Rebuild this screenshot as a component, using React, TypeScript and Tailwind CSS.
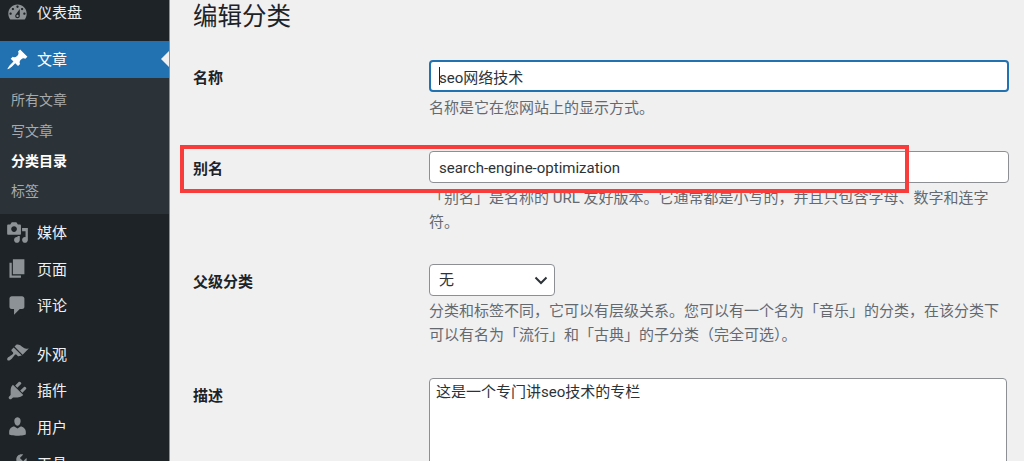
import type { ReactNode } from "react";

const ICONS: Record<string, string> = {
  dashboard:
    "M3.76 16h12.48c1.1-1.37 1.76-3.11 1.76-5 0-4.42-3.58-8-8-8s-8 3.58-8 8c0 1.89.66 3.63 1.76 5zM10 4c.55 0 1 .45 1 1s-.45 1-1 1-1-.45-1-1 .45-1 1-1zM6 6c.55 0 1 .45 1 1s-.45 1-1 1-1-.45-1-1 .45-1 1-1zm8 0c.55 0 1 .45 1 1s-.45 1-1 1-1-.45-1-1 .45-1 1-1zm-5.37 5.55L12 7v6c0 1.1-.9 2-2 2s-2-.9-2-2c0-.57.24-1.08.63-1.45zM4 10c.55 0 1 .45 1 1s-.45 1-1 1-1-.45-1-1 .45-1 1-1zm12 0c.55 0 1 .45 1 1s-.45 1-1 1-1-.45-1-1 .45-1 1-1zm-5 3c0-.55-.45-1-1-1s-1 .45-1 1 .45 1 1 1 1-.45 1-1z",
  pin: "M10.44 3.02l1.82-1.82 6.36 6.35-1.83 1.82c-1.05-.68-2.48-.57-3.41.36l-.75.75c-.92.93-1.04 2.35-.35 3.41l-1.83 1.82-2.41-2.41-2.8 2.79c-.42.42-3.38 2.71-3.8 2.29s1.86-3.39 2.28-3.81l2.79-2.79L4.1 9.36l1.83-1.82c1.05.69 2.48.57 3.4-.36l.75-.75c.93-.92 1.05-2.35.36-3.41z",
  media:
    "M13 11V4c0-.55-.45-1-1-1h-1.67L9 1H5L3.67 3H2c-.55 0-1 .45-1 1v7c0 .55.45 1 1 1h10c.55 0 1-.45 1-1zM7 4.5c1.38 0 2.5 1.12 2.5 2.5S8.38 9.5 7 9.5 4.5 8.38 4.5 7 5.62 4.5 7 4.5zM14 6h5v10.5c0 1.38-1.12 2.5-2.5 2.5S14 17.88 14 16.5s1.12-2.5 2.5-2.5c.17 0 .34.02.5.05V9h-3V6zm-4 8.05V13h2v3.5c0 1.38-1.12 2.5-2.5 2.5S7 17.88 7 16.5 8.12 14 9.5 14c.17 0 .34.02.5.05z",
  pages: "M6 15V2h10v13H6zm-1 1h8v2H3V5h2v11z",
  comments:
    "M5 2h9c1.1 0 2 .9 2 2v7c0 1.1-.9 2-2 2h-2l-5 5v-5H5c-1.1 0-2-.9-2-2V4c0-1.1.9-2 2-2z",
  appearance:
    "M14.48 11.06L7.41 3.99l1.5-1.5c.5-.56 2.3-.47 3.51.32 1.21.8 1.43 1.28 2.91 2.1 1.18.64 2.45 1.26 4.45.85zm-.71.71L6.7 4.7 4.93 6.47c-.39.39-.39 1.02 0 1.41l1.06 1.06c.39.39.39 1.03 0 1.42-.6.6-1.43 1.11-2.21 1.69-.35.26-.7.53-1.01.84C1.43 13.23.4 14.84 1.33 15.77c.92.93 2.54-.1 3.9-1.45.31-.31.58-.66.84-1.01.58-.78 1.09-1.61 1.69-2.21.39-.39 1.02-.39 1.41 0l1.06 1.06c.39.39 1.02.39 1.41 0z",
  plugins:
    "M13.11 4.36L9.87 7.6 8 5.73l3.24-3.24c.35-.34 1.05-.2 1.56.32.52.51.66 1.21.31 1.55zm-8 1.77l.91-1.12 9.01 9.01-1.19.84c-.71.71-2.63 1.16-3.82 1.16H6.14L4.9 17.26c-.59.59-1.54.59-2.12 0-.59-.58-.59-1.53 0-2.12l1.24-1.24v-3.88c0-1.13.4-3.19 1.09-3.89zm7.26 3.97l3.24-3.24c.34-.35 1.04-.21 1.55.31.52.51.66 1.21.31 1.55l-3.24 3.25z",
  users:
    "M10 9.25c-2.27 0-2.73-3.44-2.73-3.44C7 4.02 7.82 2 9.97 2c2.16 0 2.98 2.02 2.71 3.81 0 0-.41 3.44-2.68 3.44zm0 2.57L12.72 10c2.39 0 4.52 2.33 4.52 4.53v2.49s-3.65 1.13-7.24 1.13c-3.65 0-7.24-1.13-7.24-1.13v-2.49c0-2.25 1.94-4.48 4.47-4.48z",
  tools:
    "M16.68 9.77c-1.34 1.34-3.3 1.67-4.95.99l-5.41 6.52c-.99.99-2.59.99-3.58 0s-.99-2.59 0-3.57l6.52-5.42c-.68-1.65-.35-3.61.99-4.95 1.28-1.28 3.12-1.62 4.72-1.06l-2.89 2.89 2.82 2.82 2.86-2.87c.53 1.58.18 3.39-1.08 4.65zM3.81 16.21c.4.39 1.04.39 1.43 0 .4-.4.4-1.04 0-1.43-.39-.4-1.03-.4-1.43 0-.39.39-.39 1.03 0 1.43z",
};

function MenuItem({ icon, label, active }: { icon: string; label: string; active?: boolean }) {
  return (
    <div
      className={`relative flex h-[36.5px] items-center pl-[6px] text-[15px] ${
        active ? "bg-[#2271b1] text-white" : "text-[#f0f0f1]"
      }`}
    >
      <svg viewBox="0 0 20 20" className={`h-[23px] w-[23px] ${active ? "text-white" : "text-[#8d9297]"}`} fill="currentColor">
        <path fillRule="evenodd" d={ICONS[icon]} />
      </svg>
      <span className="ml-[8px] pt-[2px]">{label}</span>
      {active && (
        <span className="absolute right-0 top-1/2 -translate-y-1/2 border-y-[8px] border-r-[8px] border-y-transparent border-r-[#f0f0f1]" />
      )}
    </div>
  );
}

function Row({ label, className, children }: { label: string; className: string; children: ReactNode }) {
  return (
    <div className={`flex ${className}`}>
      <div className="w-[236px] shrink-0 pt-[6px] text-[15px] font-bold leading-[24px] text-[#1d2327]">{label}</div>
      <div className="w-[580px] shrink-0">{children}</div>
    </div>
  );
}

function Help({ children, className = "mt-[3px]" }: { children: ReactNode; className?: string }) {
  return <p className={`${className} text-[15px] leading-[24px] text-[#646970]`}>{children}</p>;
}

export default function App() {
  return (
    <div className="flex h-[461px] w-[1024px] overflow-hidden bg-[#f0f0f1] font-['Roboto','Noto_Sans_CJK_SC',sans-serif]">
      {/* Admin menu */}
      <aside className="w-[170px] shrink-0 border-r border-[#8c8f94] bg-[#1d2327]">
        <div className="-mt-[6px] mb-[10.5px]">
          <MenuItem icon="dashboard" label="仪表盘" />
        </div>
        <MenuItem icon="pin" label="文章" active />
        <div className="flex h-[136.6px] flex-col justify-center bg-[#2c3338] pl-[11px] text-[14px] leading-[30.3px] text-[#a7aaad]">
          <div>所有文章</div>
          <div>写文章</div>
          <div className="font-bold text-white">分类目录</div>
          <div>标签</div>
        </div>
        <MenuItem icon="media" label="媒体" />
        <MenuItem icon="pages" label="页面" />
        <MenuItem icon="comments" label="评论" />
        <div className="h-[12px]" />
        <MenuItem icon="appearance" label="外观" />
        <MenuItem icon="plugins" label="插件" />
        <MenuItem icon="users" label="用户" />
        <MenuItem icon="tools" label="工具" />
      </aside>

      {/* Edit form */}
      <main className="relative min-w-0 flex-1 pl-[23px]">
        <h1 className="mt-[-1px] text-[24.5px] leading-[36px] text-[#1d2327]">编辑分类</h1>

        <Row label="名称" className="mt-[25px]">
          <div className="relative">
            <input
              readOnly
              value="seo网络技术"
              className="h-[32px] w-full rounded-[4px] border-2 border-[#2271b1] bg-white px-[8px] text-[15px] text-[#2c3338] outline-none"
            />
            <span className="absolute left-[10px] top-[7px] h-[18px] w-px bg-[#1d2327]" />
          </div>
          <Help className="mt-[4px]">名称是它在您网站上的显示方式。</Help>
        </Row>

        <Row label="别名" className="mt-[31px]">
          <input
            readOnly
            value="search-engine-optimization"
            className="h-[32px] w-full rounded-[4px] border border-[#8c8f94] bg-white px-[9px] pt-[2px] text-[15px] text-[#2c3338] outline-none"
          />
          <Help>「别名」是名称的 URL 友好版本。它通常都是小写的，并且只包含字母、数字和连字符。</Help>
        </Row>

        <Row label="父级分类" className="mt-[30px]">
          <div className="relative w-[126px]">
            <select className="h-[32px] w-full appearance-none rounded-[4px] border border-[#8c8f94] bg-white px-[9px] text-[15px] text-[#2c3338] outline-none">
              <option>无</option>
            </select>
            <svg viewBox="0 0 20 20" className="absolute right-[4px] top-[6px] h-[20px] w-[20px] text-[#2c3338]" fill="none" stroke="currentColor" strokeWidth="2">
              <path d="M4.5 7.5L10 13l5.5-5.5" />
            </svg>
          </div>
          <Help>分类和标签不同，它可以有层级关系。您可以有一个名为「音乐」的分类，在该分类下可以有名为「流行」和「古典」的子分类（完全可选）。</Help>
        </Row>

        <Row label="描述" className="mt-[31px]">
          <textarea
            readOnly
            value="这是一个专门讲seo技术的专栏"
            className="h-[120px] w-[578px] resize-none rounded-[4px] border border-[#8c8f94] bg-white px-[6px] py-[1px] text-[15px] leading-[24px] text-[#2c3338] outline-none"
          />
        </Row>

        {/* Red annotation box */}
        <div className="absolute left-[10px] top-[145px] h-[48px] w-[729px] border-4 border-[#f83b3b]" />
      </main>
    </div>
  );
}
